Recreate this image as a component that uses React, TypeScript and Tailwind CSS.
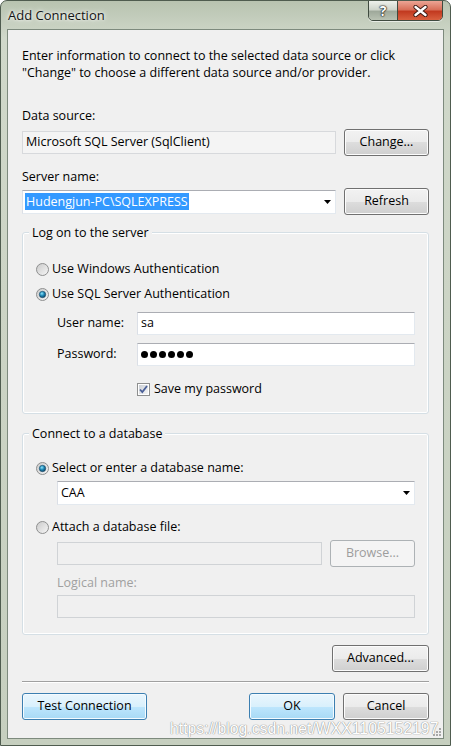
import React from 'react';

const btn =
  'flex items-center justify-center h-[27px] rounded-[3px] border border-[#707070] bg-[linear-gradient(to_bottom,#f2f2f2_0%,#ebebeb_50%,#dddddd_50%,#cfcfcf_100%)] text-black shadow-[inset_0_0_0_1px_#fcfcfc]';
const btnBlue =
  'flex items-center justify-center h-[27px] rounded-[3px] border border-[#3c7fb1] bg-[linear-gradient(to_bottom,#eaf6fd_0%,#d9f0fc_50%,#bee6fd_50%,#a7d9f5_100%)] text-black shadow-[inset_0_0_0_1px_#f4fbff]';
const btnDisabled =
  'flex items-center justify-center h-[27px] rounded-[3px] border border-[#adb2b5] bg-[#f4f4f4] text-[#9d9d9d]';
const field = 'flex items-center border border-[#abadb3] border-l-[#dbdfe6] border-r-[#e3e9ef] border-b-[#e3e9ef] bg-white px-[3px]';
const fieldDisabled = 'border border-[#d0d3d6] bg-[#f0f0f0]';

function Radio({ checked }: { checked?: boolean }) {
  return (
    <svg width="13" height="13" viewBox="0 0 13 13" className="shrink-0">
      <defs>
        <linearGradient id={checked ? 'rg1' : 'rg0'} x1="0" y1="0" x2="1" y2="1">
          <stop offset="0" stopColor="#c9c9c9" />
          <stop offset="1" stopColor="#f7f7f7" />
        </linearGradient>
        <radialGradient id="dot" cx="0.4" cy="0.35" r="0.7">
          <stop offset="0" stopColor="#8fe6fb" />
          <stop offset="0.5" stopColor="#1d86b5" />
          <stop offset="1" stopColor="#0c3f5f" />
        </radialGradient>
      </defs>
      <circle cx="6.5" cy="6.5" r="6" fill={`url(#${checked ? 'rg1' : 'rg0'})`} stroke="#8e8f8f" strokeWidth="1" />
      {checked && <circle cx="6.5" cy="6.5" r="3.2" fill="url(#dot)" stroke="#1d4a66" strokeWidth="0.6" />}
    </svg>
  );
}

function Checkbox() {
  return (
    <svg width="13" height="13" viewBox="0 0 13 13" className="shrink-0">
      <defs>
        <linearGradient id="cbg" x1="0" y1="0" x2="1" y2="1">
          <stop offset="0" stopColor="#cbcfd5" />
          <stop offset="1" stopColor="#f6f6f6" />
        </linearGradient>
      </defs>
      <rect x="0.5" y="0.5" width="12" height="12" fill="#fff" stroke="#8e8f8f" />
      <rect x="2" y="2" width="9" height="9" fill="url(#cbg)" />
      <path d="M3 6.5 L5.3 9 L10 3" fill="none" stroke="#4a5f97" strokeWidth="1.8" />
    </svg>
  );
}

function Arrow() {
  return (
    <svg width="7" height="4" viewBox="0 0 7 4" className="shrink-0">
      <path d="M0 0 H7 L3.5 4 Z" fill="#000" />
    </svg>
  );
}

function Group({ title, children, className = '' }: { title: string; children: React.ReactNode; className?: string }) {
  return (
    <div className={`relative rounded-[3px] border border-[#d5dfe5] shadow-[inset_0_0_0_1px_#ffffff] px-[13px] ${className}`}>
      <div className="absolute -top-[9px] left-[6px] h-[17px] bg-[#f0f0f0] px-[3px] leading-[17px]">{title}</div>
      {children}
    </div>
  );
}

export default function App() {
  return (
    <div className="relative w-[451px] h-[746px] overflow-hidden rounded-t-[7px] border border-[#4f5c4f] bg-[linear-gradient(to_bottom,#b8c3b0_0%,#d0d8ca_5%,#ccd4c5_40%,#c6cfbf_100%)] font-['Open_Sans','Noto_Sans',sans-serif] text-[12.5px] text-black">
      {/* title bar */}
      <div className="relative h-[28px]">
        <div className="absolute left-[7px] top-[5px] text-[13px] leading-[18px] text-[#141414] [text-shadow:0_0_6px_#ffffff,0_0_3px_#ffffff]">
          Add Connection
        </div>
        <div className="absolute right-[7px] -top-px flex h-[21px] overflow-hidden rounded-b-[5px] border border-[#3f4a3f] shadow-[0_1px_0_0_rgba(255,255,255,0.6)]">
          <div className="flex w-[29px] items-center justify-center border-r border-[#3f4a3f] bg-[linear-gradient(to_bottom,#eef1eb_0%,#cfd5cb_45%,#9fa99b_55%,#b9c2b3_100%)] text-[14px] font-bold leading-none text-white [text-shadow:0_0_2px_#111,0_0_1px_#111,0_0_1px_#111]">
            ?
          </div>
          <div className="flex w-[44px] items-center justify-center bg-[linear-gradient(to_bottom,#eca595_0%,#d8705a_45%,#c23a20_55%,#d9603f_100%)]">
            <svg width="15" height="12" viewBox="0 0 15 12">
              <path d="M2.5 2 L12.5 10 M12.5 2 L2.5 10" stroke="#3a1a14" strokeWidth="4.2" strokeLinecap="round" />
              <path d="M2.5 2 L12.5 10 M12.5 2 L2.5 10" stroke="#ffffff" strokeWidth="2.4" strokeLinecap="round" />
            </svg>
          </div>
        </div>
      </div>

      {/* client area */}
      <div className="relative ml-[6px] flex h-[710px] w-[437px] flex-col border border-[#7d8a7d] bg-[#f0f0f0] px-[14px]">
        <div className="mt-[17px] leading-[17px]">
          <div>Enter information to connect to the selected data source or click</div>
          <div>"Change" to choose a different data source and/or provider.</div>
        </div>

        <div className="mt-[26px] h-[17px] leading-[17px]">Data source:</div>
        <div className="mt-[5px] flex h-[27px] items-center justify-between">
          <div className="flex h-[23px] w-[314px] items-center border border-[#d7d9dc] bg-[#f4f4f4] px-[3px]">
            Microsoft SQL Server (SqlClient)
          </div>
          <div className={`${btn} w-[85px]`}>Change...</div>
        </div>

        <div className="mt-[12px] h-[17px] leading-[17px]">Server name:</div>
        <div className="mt-[3px] flex h-[27px] items-center justify-between">
          <div className={`${field} h-[24px] w-[314px] justify-between pr-[4px] pl-[2px]`}>
            <span className="bg-[#3399ff] px-px leading-[17px] text-white">Hudengjun-PC\SQLEXPRESS</span>
            <Arrow />
          </div>
          <div className={`${btn} w-[85px]`}>Refresh</div>
        </div>

        <Group title="Log on to the server" className="mt-[17px] pt-[27px] pb-[15px]">
          <div className="flex h-[18px] items-center gap-[3px]">
            <Radio />
            <span>Use Windows Authentication</span>
          </div>
          <div className="mt-[7px] flex h-[18px] items-center gap-[3px]">
            <Radio checked />
            <span>Use SQL Server Authentication</span>
          </div>
          <div className="mt-[9px] flex h-[23px] items-center pl-[21px]">
            <span className="w-[80px]">User name:</span>
            <div className={`${field} h-[23px] flex-1`}>sa</div>
          </div>
          <div className="mt-[8px] flex h-[23px] items-center pl-[21px]">
            <span className="w-[80px]">Password:</span>
            <div className={`${field} h-[23px] flex-1 gap-[2px]`}>
              {Array.from({ length: 6 }).map((_, i) => (
                <span key={i} className="h-[7px] w-[7px] rounded-full bg-black" />
              ))}
            </div>
          </div>
          <div className="mt-[14px] flex h-[18px] items-center gap-[4px] pl-[101px]">
            <Checkbox />
            <span>Save my password</span>
          </div>
        </Group>

        <Group title="Connect to a database" className="mt-[19px] pt-[25px] pb-[16px]">
          <div className="flex h-[18px] items-center gap-[3px]">
            <Radio checked />
            <span>Select or enter a database name:</span>
          </div>
          <div className="mt-[4px] pl-[21px]">
            <div className={`${field} h-[24px] justify-between pr-[4px]`}>
              <span>CAA</span>
              <Arrow />
            </div>
          </div>
          <div className="mt-[13px] flex h-[18px] items-center gap-[3px]">
            <Radio />
            <span>Attach a database file:</span>
          </div>
          <div className="mt-[4px] flex h-[27px] items-center justify-between pl-[21px]">
            <div className={`${fieldDisabled} h-[23px] w-[265px]`} />
            <div className={`${btnDisabled} w-[85px]`}>Browse...</div>
          </div>
          <div className="mt-[7px] h-[17px] pl-[21px] leading-[17px] text-[#a0a0a0]">Logical name:</div>
          <div className="mt-[4px] pl-[21px]">
            <div className={`${fieldDisabled} h-[23px]`} />
          </div>
        </Group>

        <div className="mt-[10px] flex justify-end">
          <div className={`${btn} w-[97px]`}>Advanced...</div>
        </div>

        <div className="mt-[9px] border-t border-b border-t-[#a0a0a0] border-b-white" />

        <div className="mt-[10px] flex items-center">
          <div className={`${btnBlue} w-[125px]`}>Test Connection</div>
          <div className="flex-1" />
          <div className={`${btnBlue} w-[86px] shadow-[inset_0_0_0_1px_#f4fbff,0_0_3px_1px_#7fd6f7]`}>OK</div>
          <div className={`${btn} ml-[8px] w-[86px]`}>Cancel</div>
        </div>

        {/* watermark */}
        <div className="pointer-events-none absolute left-[162px] top-[690px] whitespace-nowrap font-['Liberation_Sans',sans-serif] text-[15.8px] leading-[18px] text-white [text-shadow:0_0_1px_#8a8a8a,0_0_1px_#8a8a8a]">
          https://blog.csdn.net/WXX1105152197
        </div>

        {/* size grip */}
        <svg width="10" height="10" viewBox="0 0 10 10" className="absolute right-[1px] bottom-[1px]">
          {[
            [8, 2],
            [8, 5],
            [5, 5],
            [8, 8],
            [5, 8],
            [2, 8],
          ].map(([x, y], i) => (
            <rect key={i} x={x - 1} y={y - 1} width="2" height="2" fill="#a8a8a8" />
          ))}
        </svg>
      </div>
    </div>
  );
}
